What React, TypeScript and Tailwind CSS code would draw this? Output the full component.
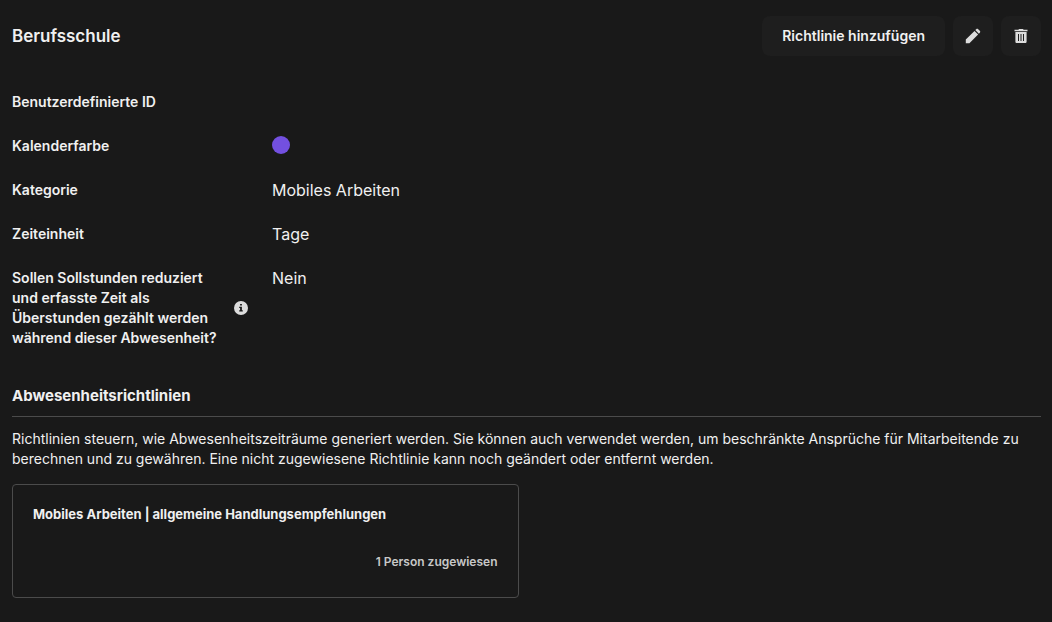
import type { ReactNode } from "react";

function PencilIcon() {
  return (
    <svg viewBox="0 0 16 16" className="size-4" fill="currentColor" aria-hidden="true">
      <path d="M.8 15.2v-3.6L9.5 2.9l3.6 3.6-8.7 8.7zM10.3 2.1l.9-.9c.6-.6 1.4-.6 2 0l1.6 1.6c.6.6.6 1.4 0 2l-.9.9z" />
    </svg>
  );
}

function TrashIcon() {
  return (
    <svg viewBox="0 0 16 16" className="size-4" fill="currentColor" aria-hidden="true">
      <path d="M1.5 1.7h3.9L6 .9h4l.6.8h3.9v1.5h-13z" />
      <path
        fillRule="evenodd"
        d="M2.4 4h11.2v9.7c0 .9-.6 1.4-1.4 1.4H3.8c-.8 0-1.4-.5-1.4-1.4zM5 6v7h1V6zm2.5 0v7h1V6zM10 6v7h1V6z"
      />
    </svg>
  );
}

function InfoIcon() {
  return (
    <svg viewBox="0 0 14 14" className="size-3.5 shrink-0 text-[#dcdcdc]" role="img" aria-label="Info">
      <circle cx="7" cy="7" r="7" fill="currentColor" />
      <path d="M6.1 3h1.8v1.6H6.1zM5.2 5.8h2.7v3.5h.9v1.2H5.2V9.3h.9V7h-.9z" fill="#191919" />
    </svg>
  );
}

function Row({ label, info, children }: { label: string; info?: boolean; children?: ReactNode }) {
  return (
    <div className="grid grid-cols-[236px_1fr] gap-x-6">
      <dt className="flex items-center justify-between text-sm leading-5 font-semibold">
        <span className="max-w-[212px]">{label}</span>
        {info && <InfoIcon />}
      </dt>
      <dd className="text-base leading-5">{children}</dd>
    </div>
  );
}

export default function App() {
  return (
    <div className="min-h-screen bg-[#191919] py-4 pr-[11px] pl-3 font-['Inter',sans-serif] text-[#f0f0f0]">
      <header className="flex items-center justify-between">
        <h1 className="text-[17px] leading-6 font-semibold">Berufsschule</h1>
        <div className="flex gap-2">
          <button type="button" className="h-10 rounded-lg bg-[#1e1e1e] px-5 text-sm font-semibold">
            Richtlinie hinzufügen
          </button>
          <button type="button" aria-label="Bearbeiten" className="flex size-10 items-center justify-center rounded-lg bg-[#1e1e1e] text-[#dcdcdc]">
            <PencilIcon />
          </button>
          <button type="button" aria-label="Löschen" className="flex size-10 items-center justify-center rounded-lg bg-[#1e1e1e] text-[#dcdcdc]">
            <TrashIcon />
          </button>
        </div>
      </header>

      <dl className="mt-9 flex flex-col gap-6">
        <Row label="Benutzerdefinierte ID" />
        <Row label="Kalenderfarbe">
          <span className="block size-[18px] rounded-full bg-[#7350e0]" />
        </Row>
        <Row label="Kategorie">Mobiles Arbeiten</Row>
        <Row label="Zeiteinheit">Tage</Row>
        <Row label="Sollen Sollstunden reduziert und erfasste Zeit als Überstunden gezählt werden während dieser Abwesenheit?" info>
          Nein
        </Row>
      </dl>

      <section className="mt-9">
        <h2 className="border-b border-[#4b4b4b] pb-2 text-[15px] leading-6 font-bold">Abwesenheitsrichtlinien</h2>
        <p className="mt-3 text-sm leading-5">
          Richtlinien steuern, wie Abwesenheitszeiträume generiert werden. Sie können auch verwendet werden, um
          beschränkte Ansprüche für Mitarbeitende zu berechnen und zu gewähren. Eine nicht zugewiesene Richtlinie kann
          noch geändert oder entfernt werden.
        </p>
        <div className="mt-[15px] grid grid-cols-2 gap-4">
          <article className="rounded border border-[#4b4b4b] px-5 pt-5 pb-[25px]">
            <h3 className="text-[13px] leading-[18px] font-bold">Mobiles Arbeiten | allgemeine Handlungsempfehlungen</h3>
            <p className="mt-[29px] text-right text-xs leading-5 font-semibold text-[#c8c8c8]">1 Person zugewiesen</p>
          </article>
        </div>
      </section>
    </div>
  );
}
